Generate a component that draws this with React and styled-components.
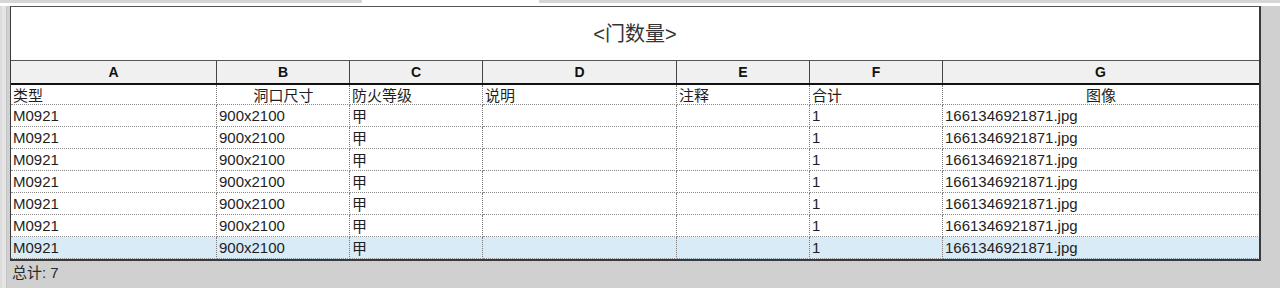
import styled, { createGlobalStyle } from 'styled-components';

const GlobalStyle = createGlobalStyle`
  html, body {
    margin: 0;
    padding: 0;
    background: #d0d0d0;
  }
  body {
    font-family: 'Liberation Sans', Arial, 'Noto Sans CJK SC', sans-serif;
  }
`;

const COLUMNS = '206px 133px 133px 194px 133px 133px 315px';

const letters = ['A', 'B', 'C', 'D', 'E', 'F', 'G'];

const fields = [
  { text: '类型' },
  { text: '洞口尺寸', center: true },
  { text: '防火等级' },
  { text: '说明' },
  { text: '注释' },
  { text: '合计' },
  { text: '图像', center: true },
];

const doors = Array.from({ length: 7 }, () => [
  'M0921',
  '900x2100',
  '甲',
  '',
  '',
  '1',
  '1661346921871.jpg',
]);

export default function App() {
  return (
    <Page>
      <GlobalStyle />
      <TabStrip>
        <Tab />
        <Tab $active />
        <Tab $grow />
      </TabStrip>
      <Workspace>
        <Gutter />
        <SheetArea>
          <Sheet>
            <TitleBox>&lt;门数量&gt;</TitleBox>
            <HeaderRow>
              {letters.map((l) => (
                <HeaderCell key={l}>{l}</HeaderCell>
              ))}
            </HeaderRow>
            <Row $height={20}>
              {fields.map((f) => (
                <Cell key={f.text} $center={f.center}>
                  {f.text}
                </Cell>
              ))}
            </Row>
            {doors.map((row, i) => (
              <Row key={i} $height={22} $selected={i === doors.length - 1}>
                {row.map((value, j) => (
                  <Cell key={j}>{value}</Cell>
                ))}
              </Row>
            ))}
          </Sheet>
          <Footer>总计: 7</Footer>
        </SheetArea>
      </Workspace>
    </Page>
  );
}

const Page = styled.div`
  width: 1280px;
  height: 288px;
  overflow: hidden;
  display: flex;
  flex-direction: column;
  background: #d0d0d0;
`;

const TabStrip = styled.div`
  display: flex;
  height: 3px;
  background: #d6d6d6;
  border-bottom: 3px solid #ffffff;
`;

const Tab = styled.div`
  width: ${(p) => (p.$active ? '177px' : '362px')};
  flex: ${(p) => (p.$grow ? 1 : 'none')};
  background: ${(p) => (p.$active ? '#ffffff' : '#d6d6d6')};
`;

const Workspace = styled.div`
  flex: 1;
  display: flex;
`;

const Gutter = styled.div`
  width: 7px;
  margin-right: 3px;
  background: #e4e4e4;
  border-left: 2px solid #dcdcdc;
  border-right: 1px solid #c4c4c4;
  box-sizing: border-box;
`;

const SheetArea = styled.div`
  display: flex;
  flex-direction: column;
`;

const Sheet = styled.div`
  width: 1248px;
  background: #ffffff;
  border-left: 1px solid #3a3a3a;
  border-right: 2px solid #3a3a3a;
  border-bottom: 2px solid #3a3a3a;
  border-top: 1px solid #555555;
`;

const TitleBox = styled.div`
  height: 54px;
  display: flex;
  align-items: center;
  justify-content: center;
  padding-bottom: 3px;
  box-sizing: border-box;
  font-size: 20px;
  color: #333333;
  border-bottom: 1px solid #555555;
`;

const HeaderRow = styled.div`
  display: grid;
  grid-template-columns: ${COLUMNS};
  height: 24px;
  background: #f0f0f0;
  border-bottom: 2px solid #111111;
  box-sizing: border-box;
`;

const HeaderCell = styled.div`
  display: flex;
  align-items: center;
  justify-content: center;
  font-size: 14px;
  font-weight: bold;
  color: #111111;
  border-right: 1px solid #444444;

  &:last-child {
    border-right: 0;
  }
`;

const Row = styled.div`
  display: grid;
  grid-template-columns: ${COLUMNS};
  height: ${(p) => p.$height}px;
  background: ${(p) => (p.$selected ? '#d9ebf7' : '#ffffff')};
`;

const Cell = styled.div`
  box-sizing: border-box;
  display: flex;
  align-items: center;
  justify-content: ${(p) => (p.$center ? 'center' : 'flex-start')};
  padding: 0 1px 0 2px;
  font-size: 15px;
  color: #1e1e1e;
  white-space: nowrap;
  overflow: hidden;
  border-right: 1px dotted #7a7a7a;
  border-bottom: 1px dotted #8a8a8a;

  &:last-child {
    border-right: 0;
  }
`;

const Footer = styled.div`
  padding: 3px 0 0 2px;
  line-height: 17px;
  font-size: 15px;
  color: #2a2a2a;
`;
